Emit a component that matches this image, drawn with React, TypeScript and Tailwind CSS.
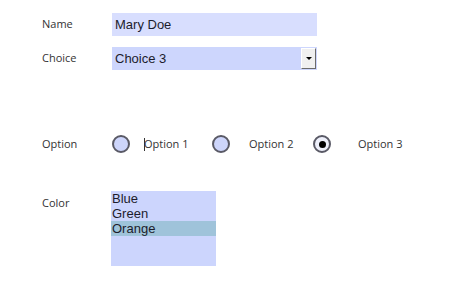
import {useState} from "react";

const labelCls = "w-[70px] shrink-0 text-[11px] text-[#333] [font-family:'Open_Sans','Noto_Sans',sans-serif]";
const fieldFont = "[font-family:'Liberation_Sans',Arial,sans-serif] text-[13px] text-[#1c1c2c]";

function Radio({checked}: {checked: boolean}) {
  return (
    <span className={`flex h-[18px] w-[18px] items-center justify-center rounded-full border-2 border-[#5a5a66] ${checked ? "bg-[#eef0fb]" : "bg-[#cdd5fb]"}`}>
      {checked ? <span className="h-[7px] w-[7px] rounded-full bg-black" /> : null}
    </span>
  );
}

export default function App() {
  const [selected] = useState("Orange");
  const colors = ["Blue", "Green", "Orange"];

  return (
    <div className="h-[289px] w-[474px] bg-white pl-[42px] pt-[13px]">
      <div className="flex h-[23px] items-center">
        <span className={labelCls}>Name</span>
        <div className={`flex h-[23px] w-[205px] items-center bg-[#d8defe] pl-[3px] ${fieldFont}`}>Mary Doe</div>
      </div>

      <div className="mt-[11px] flex h-[23px] items-center">
        <span className={labelCls}>Choice</span>
        <div className={`flex h-[23px] w-[205px] items-center justify-between bg-[#cdd6fd] pl-[3px] pr-[1px] ${fieldFont}`}>
          <span>Choice 3</span>
          <span className="flex h-[21px] w-[15px] items-center justify-center border-b border-r border-[#6b6b6b] border-l border-t border-l-white border-t-white bg-[#f0f0f0]">
            <span className="h-0 w-0 border-x-[3px] border-t-[3px] border-x-transparent border-t-black" />
          </span>
        </div>
      </div>

      <div className="mt-[65px] flex h-[18px] items-center text-[11px] text-[#333] [font-family:'Open_Sans','Noto_Sans',sans-serif]">
        <span className={labelCls}>Option</span>
        <Radio checked={false} />
        <span className="ml-[14px] flex w-[68px] items-center">
          <span className="-mr-[1px] h-[13px] w-[1px] bg-[#333]" />
          Option 1
        </span>
        <Radio checked={false} />
        <span className="ml-[19px] w-[64px]">Option 2</span>
        <Radio checked={true} />
        <span className="ml-[27px]">Option 3</span>
      </div>

      <div className="mt-[38px] flex items-start">
        <span className={`${labelCls} pt-[4px]`}>Color</span>
        <ul className={`-ml-[1px] h-[75px] w-[105px] bg-[#ccd5fd] leading-[15px] ${fieldFont}`}>
          {colors.map((c) => (
            <li key={c} className={`pl-[1px] ${c === selected ? "bg-[#9fc3da]" : ""}`}>{c}</li>
          ))}
        </ul>
      </div>
    </div>
  );
}
